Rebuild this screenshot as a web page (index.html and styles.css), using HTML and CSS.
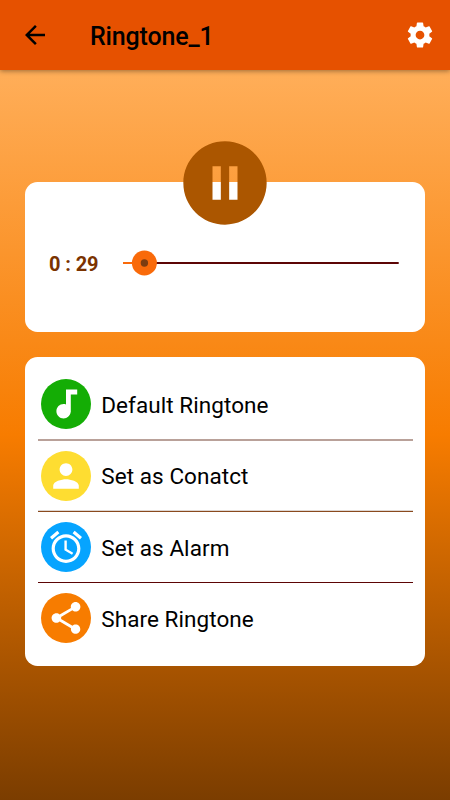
FILE: index.html
```html
<!DOCTYPE html>
<html lang="en">
<head>
<meta charset="utf-8">
<title>Ringtone_1</title>
<link rel="stylesheet" href="styles.css">
</head>
<body>
<header class="bar">
  <svg class="bar-icon" viewBox="0 0 24 24"><path d="M20 11H7.83l5.59-5.59L12 4l-8 8 8 8 1.41-1.41L7.83 13H20v-2z"/></svg>
  <h1 class="title">Ringtone_1</h1>
  <svg class="bar-icon settings" viewBox="0 0 24 24"><path d="M19.43 12.98c.04-.32.07-.64.07-.98s-.03-.66-.07-.98l2.11-1.65c.19-.15.24-.42.12-.64l-2-3.46c-.12-.22-.39-.3-.61-.22l-2.49 1c-.52-.4-1.08-.73-1.69-.98l-.38-2.65C14.46 2.18 14.25 2 14 2h-4c-.25 0-.46.18-.49.42l-.38 2.65c-.61.25-1.17.59-1.69.98l-2.49-1c-.23-.09-.49 0-.61.22l-2 3.46c-.13.22-.07.49.12.64l2.11 1.65c-.04.32-.07.65-.07.98s.03.66.07.98l-2.11 1.65c-.19.15-.24.42-.12.64l2 3.46c.12.22.39.3.61.22l2.49-1c.52.4 1.08.73 1.69.98l.38 2.65c.03.24.24.42.49.42h4c.25 0 .46-.18.49-.42l.38-2.65c.61-.25 1.17-.59 1.69-.98l2.49 1c.23.09.49 0 .61-.22l2-3.46c.12-.22.07-.49-.12-.64l-2.11-1.65zM12 15.5c-1.93 0-3.5-1.57-3.5-3.5s1.57-3.5 3.5-3.5 3.5 1.57 3.5 3.5-1.57 3.5-3.5 3.5z"/></svg>
</header>
<main class="screen">
  <section class="card player">
    <svg class="pause" viewBox="0 0 24 24"><path d="M12 2C6.48 2 2 6.48 2 12s4.48 10 10 10 10-4.48 10-10S17.52 2 12 2zm-1 14H9V8h2v8zm4 0h-2V8h2v8z"/></svg>
    <span class="time">0 : 29</span>
    <svg class="seek" viewBox="0 0 276 26">
      <rect class="track" x="0" y="12" width="275.7" height="2"/>
      <rect class="played" x="0" y="12" width="22" height="2"/>
      <circle class="played" cx="21.4" cy="13" r="12.5"/>
      <circle class="dot" cx="21.4" cy="13" r="3.7"/>
    </svg>
  </section>
  <section class="card menu">
    <div class="row">
      <svg class="icon green" viewBox="0 0 50 50"><g transform="translate(5.8 5.8) scale(1.6)"><path d="M12 3v9.28c-.47-.17-.97-.28-1.5-.28C8.01 12 6 14.01 6 16.5S8.01 21 10.5 21c2.31 0 4.2-1.75 4.45-4H15V6h4V3h-7z"/></g></svg>
      <span>Default Ringtone</span>
    </div>
    <div class="row">
      <svg class="icon yellow" viewBox="0 0 50 50"><g transform="translate(5.8 5.8) scale(1.6)"><path d="M12 12c2.21 0 4-1.79 4-4s-1.79-4-4-4-4 1.79-4 4 1.79 4 4 4zm0 2c-2.67 0-8 1.34-8 4v2h16v-2c0-2.66-5.33-4-8-4z"/></g></svg>
      <span>Set as Conatct</span>
    </div>
    <div class="row">
      <svg class="icon blue" viewBox="0 0 50 50"><g transform="translate(5.8 5.8) scale(1.6)"><path d="M22 5.72l-4.6-3.86-1.29 1.53 4.6 3.86L22 5.72zM7.88 3.39L6.6 1.86 2 5.71l1.29 1.53 4.59-3.85zM12.5 8H11v6l4.75 2.85.75-1.23-4-2.37V8zM12 4c-4.97 0-9 4.03-9 9s4.02 9 9 9c4.97 0 9-4.03 9-9s-4.03-9-9-9zm0 16c-3.87 0-7-3.13-7-7s3.13-7 7-7 7 3.13 7 7-3.13 7-7 7z"/></g></svg>
      <span>Set as Alarm</span>
    </div>
    <div class="row">
      <svg class="icon orange" viewBox="0 0 50 50"><g transform="translate(5.8 5.8) scale(1.6)"><path d="M18 16.08c-.76 0-1.44.3-1.96.77L8.91 12.7c.05-.23.09-.46.09-.7s-.04-.47-.09-.7l7.05-4.11c.54.5 1.25.81 2.04.81 1.66 0 3-1.34 3-3s-1.34-3-3-3-3 1.34-3 3c0 .24.04.47.09.7L8.04 9.81C7.5 9.31 6.79 9 6 9c-1.66 0-3 1.34-3 3s1.34 3 3 3c.79 0 1.5-.31 2.04-.81l7.12 4.16c-.05.21-.08.43-.08.65 0 1.61 1.31 2.92 2.92 2.92 1.61 0 2.92-1.31 2.92-2.92s-1.31-2.92-2.92-2.92z"/></g></svg>
      <span>Share Ringtone</span>
    </div>
  </section>
</main>
</body>
</html>
```
FILE: styles.css
```css
* { box-sizing: border-box; }

body {
  margin: 0;
  height: 800px;
  display: flex;
  flex-direction: column;
  overflow: hidden;
  font-family: Roboto, "Liberation Sans", sans-serif;
  color: #000;
}

.bar {
  height: 70px;
  flex: none;
  display: flex;
  align-items: center;
  padding: 0 15px 0 20px;
  background: #e65100;
  box-shadow: 0 1px 5px rgba(0, 0, 0, .4);
  z-index: 1;
}
.bar-icon { width: 30px; height: 30px; flex: none; }
.settings { fill: #fff; }
.title {
  flex: 1;
  margin: 4px 0 0 40px;
  font-size: 25px;
  line-height: 30px;
  font-weight: 500;
  letter-spacing: -.15px;
}

.screen {
  flex: 1;
  padding: 112px 25px 0;
  display: flex;
  flex-direction: column;
  gap: 25px;
  background: linear-gradient(#ffae59, #f77c00 50%, #7b3d00);
}

.card { background: #fff; border-radius: 12.5px; }

/* The pause bars are cut out, so the page shows through them. */
.player {
  position: relative;
  height: 150px;
  display: flex;
  align-items: center;
  padding: 12px 26px 0 24px;
}
.pause {
  position: absolute;
  left: 150px;
  top: -49.5px;
  width: 100px;
  height: 100px;
  fill: #ab5600;
}
.time {
  width: 74px;
  margin-top: 2px;
  font-size: 20px;
  font-weight: 700;
  letter-spacing: -.1px;
  color: #7a3200;
}
.seek { width: 276px; height: 26px; flex: none; }
.track { fill: #5c0505; }
.played { fill: #f96a0a; }
.dot { fill: #7c3c10; }

.menu {
  height: 309px;
  display: grid;
  grid-template-rows: 72px 71px 71px 70px;
  padding: 12px 12.5px;
}
.row {
  display: flex;
  align-items: flex-start;
  gap: 10px;
  padding: 10px 0 0 3.8px;
  font-size: 22.5px;
  line-height: 52px;
  letter-spacing: .06px;
}
.row:nth-child(1) { border-bottom: 2px solid #b9a199; }
.row:nth-child(2) {
  line-height: 50px;
  background:
    linear-gradient(#8a4a1e, #8a4a1e) bottom / 100% 1px no-repeat,
    linear-gradient(#ddd6d2, #ddd6d2) bottom / 100% 2px no-repeat;
}
.row:nth-child(3) { border-bottom: 1px solid #5c0505; }

.icon { width: 50px; height: 50px; flex: none; border-radius: 50%; fill: #fff; }
.green { background: #14ad05; }
.yellow { background: #fedd31; }
.blue { background: #06a4ff; }
.orange { background: #f77c00; }
```
